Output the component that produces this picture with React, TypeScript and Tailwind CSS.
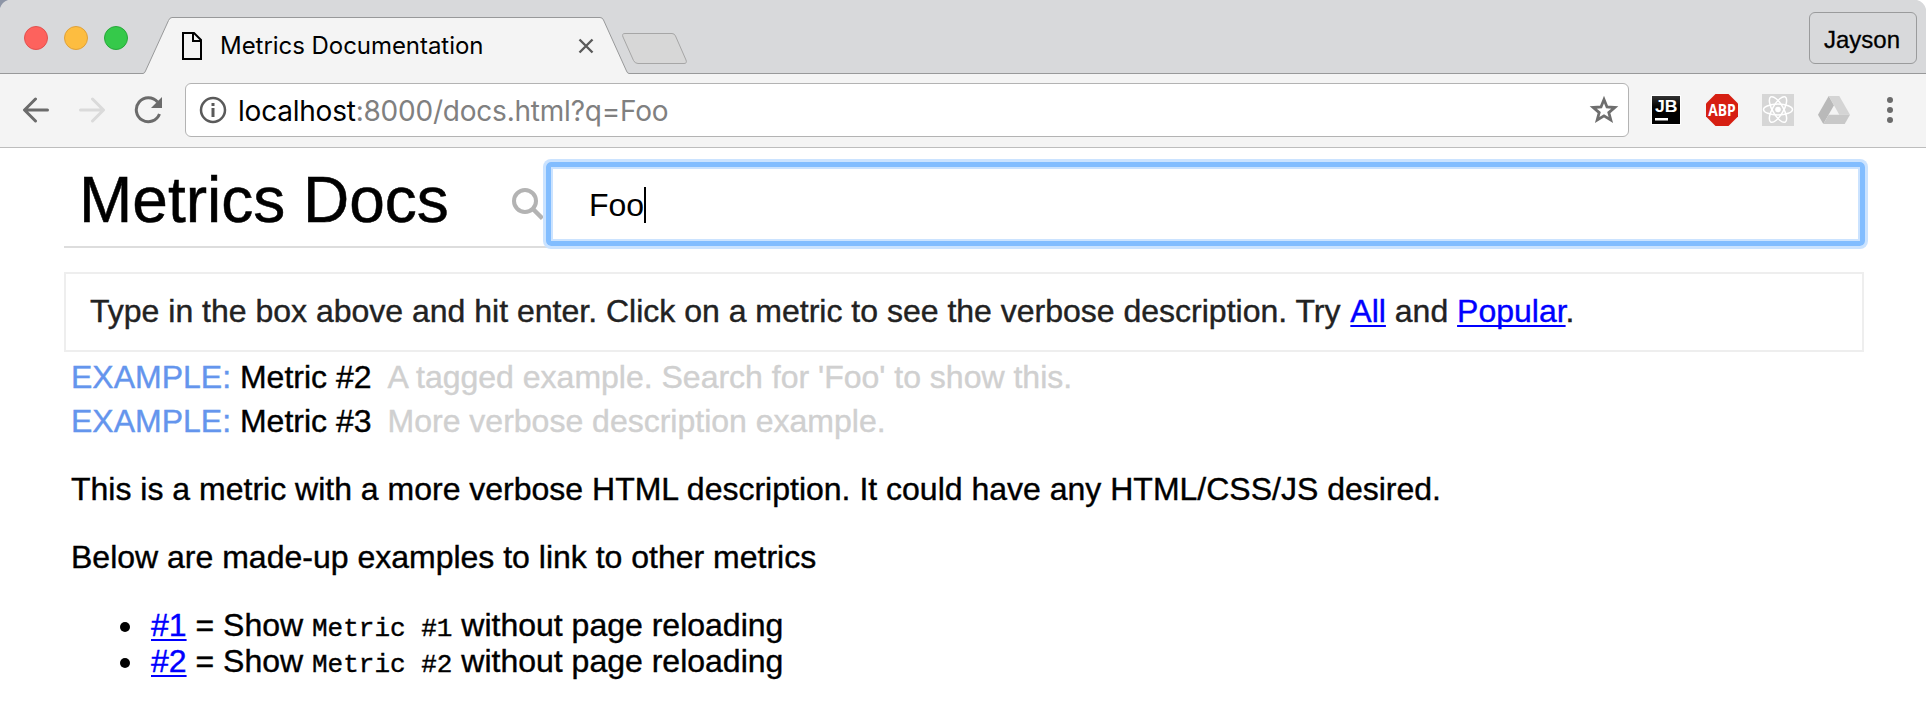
import React from "react";

function Star() {
  return (
    <svg className="h-[30px] w-[30px]" viewBox="0 0 30 30" fill="none" stroke="#6e6e6e" strokeWidth="2.8">
      <path d="M15 4.500 L18 12 L25.800 12.500 L19.800 17.600 L21.800 25 L15 20.900 L8.200 25 L10.200 17.600 L4.200 12.500 L12 12 Z" />
    </svg>
  );
}

function TabStrip() {
  return (
    <div className="relative flex h-[74px] bg-[#d8d9db]">
      <svg className="absolute left-0 top-0 h-[74px] w-[1926px]" viewBox="0 0 1926 74">
        <path d="M0 0 H8 Q2 2 0 8 Z" fill="#8d95a6" />
        <path d="M1926 0 H1917 Q1924 2 1926 9 Z" fill="#fff" />
        <path
          d="M-2 73.5 H143 Q144.500 73.500 145.500 71 L168.500 20.500 Q169.700 17.500 172 17.500 H600 Q602.500 17.500 603.500 20 L626.500 71 Q627.500 73.500 629 73.500 H1930 V80 H-2 Z"
          fill="#f4f4f4"
          stroke="#98999a"
        />
        <path
          d="M625 33.500 H672 Q674.500 33.500 675.500 36 L686 60 Q687.300 63.500 684 63.500 H638 Q635 63.500 633.500 60.500 L623 37 Q621.500 33.500 625 33.500 Z"
          fill="#d7d7d7"
          stroke="#a6a6a6"
        />
      </svg>
      <div className="relative flex w-full items-start">
        <div className="ml-6 mt-[26px] flex gap-4">
          <span className="size-6 rounded-full border border-[#e2514f] bg-[#fd625d]" />
          <span className="size-6 rounded-full border border-[#dfa13a] bg-[#fdbd40]" />
          <span className="size-6 rounded-full border border-[#27a83a] bg-[#35c94a]" />
        </div>
        <svg className="ml-[53px] mt-8 h-7 w-[22px]" viewBox="0 0 22 28" fill="none" stroke="#000" strokeWidth="2">
          <path d="M2 1 H13 L20 8 V27 H2 Z M12 1 V9 H20" />
        </svg>
        <div className="ml-[17px] mt-[30px] w-[262px] whitespace-nowrap font-['Inter'] text-[24px] leading-8 tracking-[-0.045px] text-black">
          Metrics Documentation
        </div>
        <svg className="ml-[96px] mt-[38px] size-4" viewBox="0 0 16 16" stroke="#5a5a5a" strokeWidth="2.4">
          <path d="M1.500 1.500 L14.500 14.500 M14.500 1.500 L1.500 14.500" />
        </svg>
        <div className="ml-auto mr-[9px] mt-3 flex h-[52px] w-[108px] items-center justify-center rounded-md border border-[#9a9b9c] pr-0.5 pt-1 font-['Liberation_Sans'] text-[24px] text-black [-webkit-text-stroke:0.3px]">
          Jayson
        </div>
      </div>
    </div>
  );
}

function Extensions() {
  return (
    <div className="flex items-center">
      <div className="ml-[22px] flex size-[30px] items-center justify-center border border-white bg-linear-to-b from-[#333] to-black to-60%">
        <svg className="size-7" viewBox="0 0 28 28">
          <text x="3" y="15.500" fontSize="16" fontWeight="700" fontFamily="Liberation Sans" fill="#fff" textLength="22.500" lengthAdjust="spacingAndGlyphs">JB</text>
          <rect x="3" y="22" width="13" height="2.500" fill="#fff" />
        </svg>
      </div>
      <svg className="ml-[25px] size-8 overflow-visible" viewBox="0 0 32 32">
        <path d="M9.500 0 H22.500 L32 9.500 V22.500 L22.500 32 H9.500 L0 22.500 V9.500 Z" fill="#d61f12" />
        <text x="2.200" y="22" fontSize="16.5" fontWeight="700" fontFamily="Open Sans" fill="#fff" textLength="27.500" lengthAdjust="spacingAndGlyphs">ABP</text>
      </svg>
      <svg className="ml-6 size-8" viewBox="0 0 32 32" fill="none" stroke="#fff" strokeWidth="1.500">
        <rect width="32" height="32" fill="#d6d6d6" stroke="none" />
        <ellipse cx="16" cy="15.500" rx="14.500" ry="5.400" />
        <ellipse cx="16" cy="15.500" rx="14.500" ry="5.400" transform="rotate(60 16 15.500)" />
        <ellipse cx="16" cy="15.500" rx="14.500" ry="5.400" transform="rotate(120 16 15.500)" />
        <circle cx="16" cy="15.500" r="2.800" fill="#fff" stroke="none" />
      </svg>
      <svg className="ml-6 h-7 w-8" viewBox="0 0 32 28">
        <path d="M10.700 0 L0 18.700 L5.300 28 L16 9.300 Z" fill="#b9b9b9" />
        <path d="M10.700 0 H21.300 L32 18.700 H21.300 Z" fill="#d4d4d4" />
        <path d="M10.700 18.700 H32 L26.700 28 H5.300 Z" fill="#c8c8c8" />
      </svg>
      <svg className="ml-[37px] h-7 w-[6px]" viewBox="0 0 6 28" fill="#6b6b6b">
        <circle cx="3" cy="4" r="3" />
        <circle cx="3" cy="14" r="3" />
        <circle cx="3" cy="24" r="3" />
      </svg>
    </div>
  );
}

function Toolbar() {
  return (
    <div className="flex h-[74px] items-center border-b border-[#bdbdbd] bg-[#f4f4f4] pb-px">
      <svg className="ml-[22px] h-[26px] w-[28px]" viewBox="0 0 28 26" fill="none" stroke="#6b6b6b" strokeWidth="3" strokeLinecap="round" strokeLinejoin="round">
        <path d="M25.500 13 H3 M13.500 2 L2.500 13 L13.500 24" />
      </svg>
      <svg className="ml-[28px] h-[26px] w-[28px]" viewBox="0 0 28 26" fill="none" stroke="#dadada" strokeWidth="3" strokeLinecap="round" strokeLinejoin="round">
        <path d="M2.500 13 H25 M14.500 2 L25.500 13 L14.500 24" />
      </svg>
      <svg className="ml-[28px] h-[28px] w-[30px]" viewBox="0 0 30 28" fill="none">
        <path d="M23.500 6 A12 12 0 1 0 25.500 18" stroke="#6b6b6b" strokeWidth="3" />
        <path d="M28 1 V12 H17 Z" fill="#6b6b6b" />
      </svg>
      <div className="ml-[21px] flex h-[54px] w-[1444px] items-center rounded-md border border-[#b3b3b3] bg-white">
        <svg className="ml-[13px] size-7" viewBox="0 0 28 28" fill="none">
          <circle cx="14" cy="14" r="12" stroke="#5a5a5a" strokeWidth="2.500" />
          <rect x="12.500" y="7" width="3" height="3" fill="#5a5a5a" />
          <rect x="12.500" y="12" width="3" height="9" fill="#5a5a5a" />
        </svg>
        <div className="ml-[11px] mt-0.5 whitespace-nowrap font-['Inter'] text-[28px] leading-[34px] tracking-[-0.22px] text-[#808080]">
          <span className="text-black">localhost</span>:8000/docs.html?q=Foo
        </div>
        <div className="ml-auto mr-[9px]">
          <Star />
        </div>
      </div>
      <Extensions />
    </div>
  );
}

const link = "text-[#0000ff] underline decoration-2 underline-offset-[3px] [text-decoration-skip-ink:none]";

const metrics = [
  { name: "Metric #2", text: "A tagged example. Search for 'Foo' to show this." },
  { name: "Metric #3", text: "More verbose description example." },
];

export default function App() {
  return (
    <div className="h-[708px] w-[1926px] overflow-hidden bg-white font-['Liberation_Sans',Arial,sans-serif] text-[32px] leading-9 text-black">
      <TabStrip />
      <Toolbar />
      <main className="mx-[64px] w-[1800px] [-webkit-text-stroke:0.4px]">
        <header className="flex h-[100px] border-b-2 border-[#ddd]">
          <h1 className="ml-[15px] mt-[15px] w-[432px] text-[64px] leading-[74px] [-webkit-text-stroke:0.5px]">Metrics Docs</h1>
          <svg className="mt-[39px] h-[34px] w-[34px]" viewBox="0 0 34 34" fill="none" stroke="#b3b3b3">
            <circle cx="14" cy="14" r="11" strokeWidth="4" />
            <path d="M21.500 21.500 L31.500 31.500" strokeWidth="4.500" />
          </svg>
          <div className="-mr-px ml-auto mt-[14px] flex h-[84px] w-[1319px] shrink-0 items-center rounded-[5px] border-[5px] border-[#82bdff] pl-[38px] pt-px shadow-[0_0_0_3px_#cbe3ff,inset_0_0_0_2px_#cbe3ff]">
            <span className="[-webkit-text-stroke:0px]">Foo</span>
            <span className="h-9 w-[2px] bg-black" />
          </div>
        </header>
        <div className="mt-6 h-20 border-2 border-[#eee] pl-6 pt-[19px] text-[#222]">
          Type in the box above and hit enter. Click on a metric to see the verbose description. Try{" "}
          <a className={`ml-px ${link}`}>All</a> and <a className={link}>Popular</a>.
        </div>
        <div className="pl-[7px]">
          <div className="pt-[3px]">
            {metrics.map((m) => (
              <div key={m.name} className="flex h-11 items-center whitespace-pre">
                <span className="text-[#6495ed]">EXAMPLE: </span>
                <span>{m.name}</span>
                <span className="ml-4 text-[#d0d0d0]">{m.text}</span>
              </div>
            ))}
          </div>
          <p className="mt-[28px]">This is a metric with a more verbose HTML description. It could have any HTML/CSS/JS desired.</p>
          <p className="mt-8">Below are made-up examples to link to other metrics</p>
          <ul className="mt-8">
            {["#1", "#2"].map((n) => (
              <li key={n} className="flex h-9 items-baseline whitespace-pre pl-[49px]">
                <span className="mr-[21px] size-[10px] translate-y-0.5 self-center rounded-full bg-black" />
                <a className={link}>{n}</a>
                <span> = Show </span>
                <code className="font-['Liberation_Mono'] text-[26px]">Metric {n}</code>
                <span> without page reloading</span>
              </li>
            ))}
          </ul>
        </div>
      </main>
    </div>
  );
}
